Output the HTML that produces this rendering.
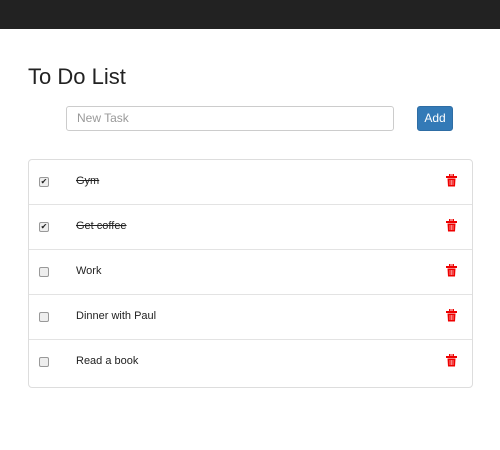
<!DOCTYPE html>
<html><head><style>
body{margin:0;width:500px;height:450px;background:#fff;font-family:"Liberation Sans",sans-serif;color:#333;position:relative;overflow:hidden}
.nav{position:absolute;left:0;top:0;width:500px;height:29px;background:#222}
h1{position:absolute;left:28px;top:64px;margin:0;font-size:22px;font-weight:400;color:#222}
.inp{position:absolute;left:66px;top:106px;border:1px solid #ccc;border-radius:3px;font-size:12px;color:#999;line-height:23px;padding-left:10px;box-sizing:border-box;width:328px;height:25px}
.btn{position:absolute;left:417px;top:106px;width:36px;height:25px;background:#337ab7;border:1px solid #2e6da4;border-radius:3px;box-sizing:border-box;color:#fff;font-size:12px;line-height:23px;text-align:center}
.list{position:absolute;left:28px;top:159px;width:445px;height:229px;border:1px solid #ddd;border-radius:4px;box-sizing:border-box}
.row{position:relative;height:45px;border-bottom:1px solid #e3e3e3;box-sizing:border-box}
.row:last-child{border-bottom:none}
.cb{position:absolute;left:10px;top:17px;width:8px;height:8px;border:1px solid #999;border-radius:2px;background:#eee;font-size:8px;line-height:8px;text-align:center;color:#222}
.t{position:absolute;left:47px;top:15px;font-size:11px;color:#222}
.s{text-decoration:line-through}
.tr{position:absolute;left:417px;top:14px}
</style></head><body>
<div class="nav"></div>
<h1>To Do List</h1>
<div class="inp">New Task</div>
<div class="btn">Add</div>
<div class="list">
<div class="row"><div class="cb">✔</div><div class="t s">Gym</div><svg class="tr" width="11" height="13" viewBox="0 0 11 13"><rect x="0" y="2" width="11" height="2" fill="#e00"/><rect x="3.5" y="0" width="4" height="2" fill="none" stroke="#e00"/><path d="M1.5 4.5h8l-.5 8h-7z" fill="#e00"/><path d="M4 6v5M5.5 6v5M7 6v5" stroke="#fbb" stroke-width=".7"/></svg></div>
<div class="row"><div class="cb">✔</div><div class="t s">Get coffee</div><svg class="tr" width="11" height="13" viewBox="0 0 11 13"><rect x="0" y="2" width="11" height="2" fill="#e00"/><rect x="3.5" y="0" width="4" height="2" fill="none" stroke="#e00"/><path d="M1.5 4.5h8l-.5 8h-7z" fill="#e00"/><path d="M4 6v5M5.5 6v5M7 6v5" stroke="#fbb" stroke-width=".7"/></svg></div>
<div class="row"><div class="cb"></div><div class="t">Work</div><svg class="tr" width="11" height="13" viewBox="0 0 11 13"><rect x="0" y="2" width="11" height="2" fill="#e00"/><rect x="3.5" y="0" width="4" height="2" fill="none" stroke="#e00"/><path d="M1.5 4.5h8l-.5 8h-7z" fill="#e00"/><path d="M4 6v5M5.5 6v5M7 6v5" stroke="#fbb" stroke-width=".7"/></svg></div>
<div class="row"><div class="cb"></div><div class="t">Dinner with Paul</div><svg class="tr" width="11" height="13" viewBox="0 0 11 13"><rect x="0" y="2" width="11" height="2" fill="#e00"/><rect x="3.5" y="0" width="4" height="2" fill="none" stroke="#e00"/><path d="M1.5 4.5h8l-.5 8h-7z" fill="#e00"/><path d="M4 6v5M5.5 6v5M7 6v5" stroke="#fbb" stroke-width=".7"/></svg></div>
<div class="row"><div class="cb"></div><div class="t">Read a book</div><svg class="tr" width="11" height="13" viewBox="0 0 11 13"><rect x="0" y="2" width="11" height="2" fill="#e00"/><rect x="3.5" y="0" width="4" height="2" fill="none" stroke="#e00"/><path d="M1.5 4.5h8l-.5 8h-7z" fill="#e00"/><path d="M4 6v5M5.5 6v5M7 6v5" stroke="#fbb" stroke-width=".7"/></svg></div>
</div>
</body></html>
